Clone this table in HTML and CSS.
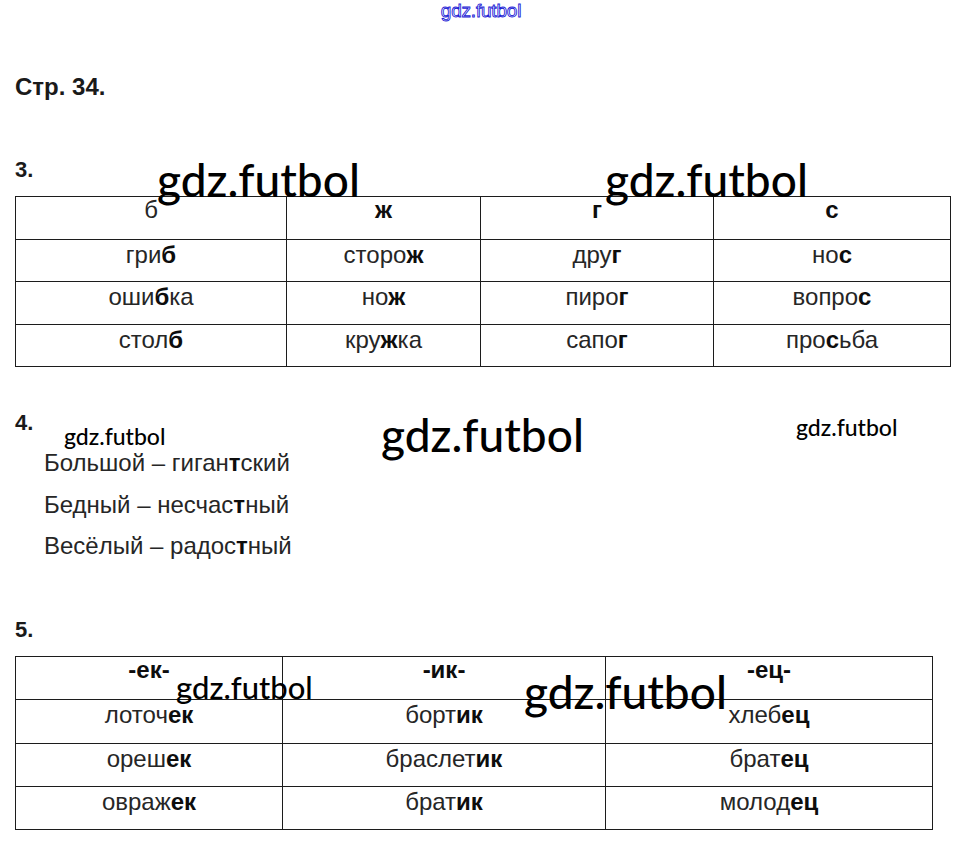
FILE: index.html
```html
<!DOCTYPE html>
<html lang="ru">
<head>
<meta charset="utf-8">
<title>Стр. 34</title>
<link rel="stylesheet" href="styles.css">
</head>
<body>
<div class="top-mark">gdz.futbol</div>
<main class="page">
  <h1 class="page-title">Стр. 34.</h1>

  <div class="task-num">3.</div>
  <table class="grid grid-1">
    <colgroup><col class="c1"><col class="c2"><col class="c3"><col class="c4"></colgroup>
    <tr class="head"><td>б</td><td><b>ж</b></td><td><b>г</b></td><td><b>с</b></td></tr>
    <tr><td>гри<b>б</b></td><td>сторо<b>ж</b></td><td>дру<b>г</b></td><td>но<b>с</b></td></tr>
    <tr><td>оши<b>б</b>ка</td><td>но<b>ж</b></td><td>пиро<b>г</b></td><td>вопро<b>с</b></td></tr>
    <tr><td>стол<b>б</b></td><td>кру<b>ж</b>ка</td><td>сапо<b>г</b></td><td>про<b>с</b>ьба</td></tr>
  </table>

  <div class="task-num task-4">4.</div>
  <div class="pairs">
    <p>Большой – гиган<b>т</b>ский</p>
    <p>Бедный – несчас<b>т</b>ный</p>
    <p>Весёлый – радос<b>т</b>ный</p>
  </div>

  <div class="task-num task-5">5.</div>
  <table class="grid grid-2">
    <colgroup><col class="d1"><col class="d2"><col class="d3"></colgroup>
    <tr class="head"><td><b>-ек-</b></td><td><b>-ик-</b></td><td><b>-ец-</b></td></tr>
    <tr class="tall"><td>лоточ<b>ек</b></td><td>борт<b>ик</b></td><td>хлеб<b>ец</b></td></tr>
    <tr><td>ореш<b>ек</b></td><td>браслет<b>ик</b></td><td>брат<b>ец</b></td></tr>
    <tr><td>овраж<b>ек</b></td><td>брат<b>ик</b></td><td>молод<b>ец</b></td></tr>
  </table>
</main>

<div class="mark big m1">gdz.futbol</div>
<div class="mark big m2">gdz.futbol</div>
<div class="mark big m3">gdz.futbol</div>
<div class="mark big m4">gdz.futbol</div>
<div class="mark small m5">gdz.futbol</div>
<div class="mark small m6">gdz.futbol</div>
<div class="mark mid m7">gdz.futbol</div>
</body>
</html>
```
FILE: styles.css
```css
html, body {
  margin: 0;
  padding: 0;
  background: #ffffff;
}

body {
  font-family: "Liberation Sans", Arial, sans-serif;
  color: #262626;
  width: 962px;
  min-height: 849px;
}

.top-mark {
  padding-top: 1px;
  height: 19px;
  font-size: 19px;
  line-height: 19px;
  text-align: center;
  color: transparent;
  -webkit-text-stroke: 0.9px #2323d6;
  letter-spacing: -0.2px;
}

.page {
  padding: 0 0 0 15px;
}

.page-title {
  margin: 55px 0 0 0;
  font-size: 24px;
  line-height: 23px;
  font-weight: bold;
  color: #1a1a1a;
}

.task-num {
  margin-top: 61px;
  font-size: 22px;
  line-height: 22px;
  font-weight: bold;
  color: #1a1a1a;
}

.task-4 {
  margin-top: 45px;
}

.task-5 {
  margin-top: 52px;
}

.grid {
  margin-top: 15px;
  border-collapse: collapse;
  table-layout: fixed;
  font-size: 24px;
  line-height: 24px;
}

.grid td {
  border: 1px solid #1c1c1c;
  text-align: center;
  vertical-align: top;
  padding: 3px 0 0 0;
  height: 39px;
  box-sizing: border-box;
}

.grid tr.head td {
  padding-top: 1px;
}

.grid b {
  color: #0d0d0d;
  font-weight: bold;
}

.grid-1 { width: 935px; }
.grid-1 .c1 { width: 271px; }
.grid-1 .c2 { width: 194px; }
.grid-1 .c3 { width: 233px; }
.grid-1 .c4 { width: 237px; }

.grid-1 tr { height: 42.5px; }

.grid-2 { width: 917px; }
.grid-2 .d1 { width: 267px; }
.grid-2 .d2 { width: 323px; }
.grid-2 .d3 { width: 327px; }

.grid-2 tr { height: 43px; }
.grid-2 tr.tall { height: 44px; }
.grid-2 tr.tall td { height: 44px; }

.pairs {
  margin: 8px 0 0 29px;
  font-size: 24px;
  line-height: 42px;
}

.pairs p {
  margin: 0;
  height: 41.7px;
}

.pairs b {
  color: #0d0d0d;
}

.mark {
  position: absolute;
  font-family: Lato, "Open Sans", sans-serif;
  font-weight: 500;
  color: #000000;
  line-height: 1;
  white-space: nowrap;
}

.big { font-size: 46px; }
.mid { font-size: 31px; }
.small { font-size: 23px; }

.m1 { left: 157px; top: 157px; }
.m2 { left: 605px; top: 157px; }
.m3 { left: 381px; top: 412px; }
.m4 { left: 524px; top: 669px; }
.m5 { left: 64px; top: 425px; }
.m6 { left: 796px; top: 416px; }
.m7 { left: 176px; top: 672px; }
```
